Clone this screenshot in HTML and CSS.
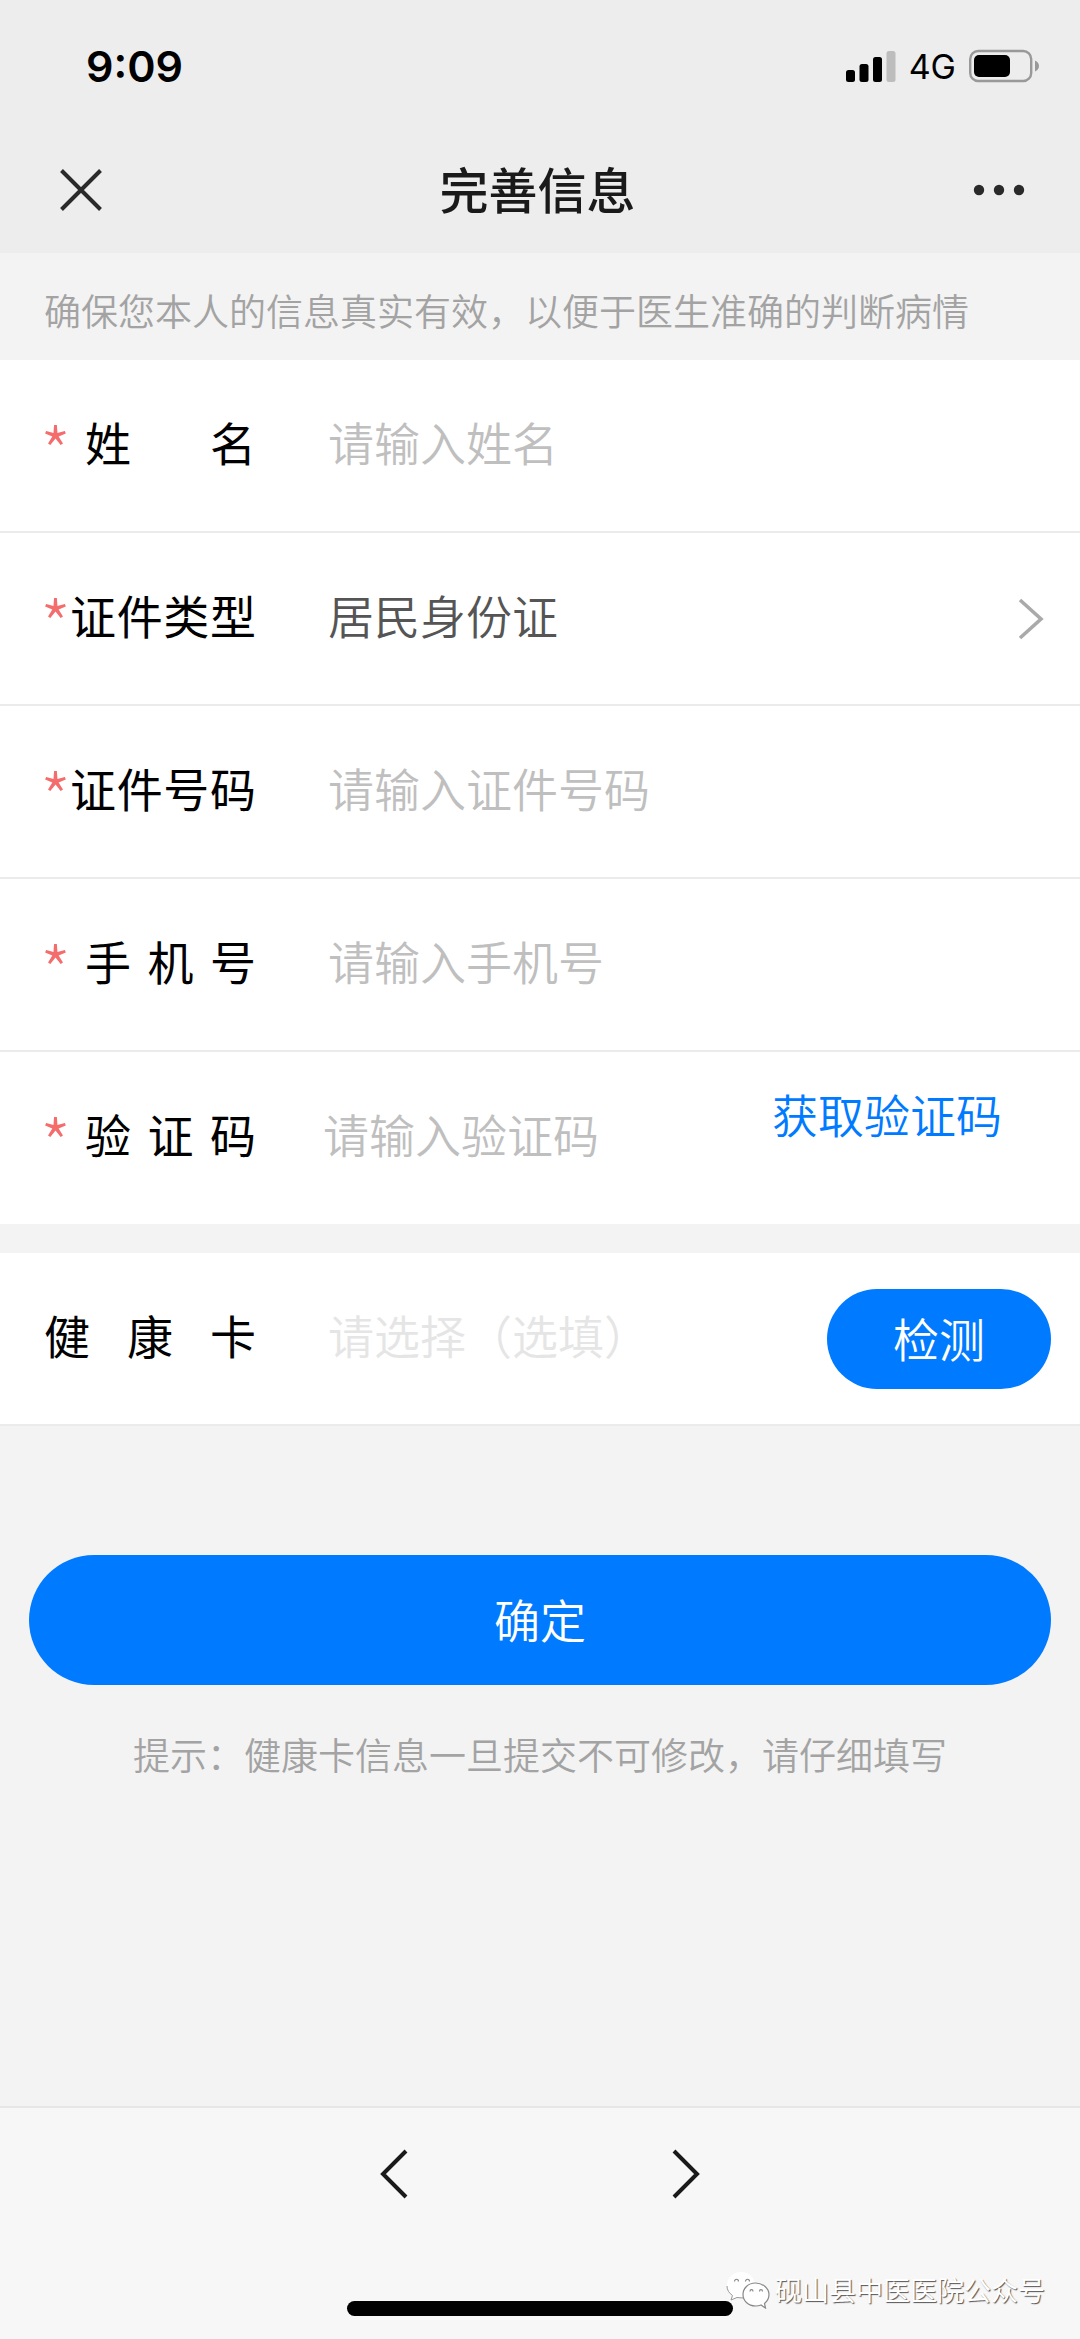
FILE: index.html
```html
<!DOCTYPE html>
<html lang="zh-CN">
<head>
<meta charset="utf-8">
<meta name="viewport" content="width=device-width, initial-scale=1">
<title>完善信息</title>
<link rel="stylesheet" href="styles.css">
</head>
<body>
<header class="header">
  <div class="status-bar">
    <span class="status-time">9:09</span>
    <div class="status-icons">
      <svg class="signal" width="50" height="32" viewBox="0 0 50 32" aria-hidden="true">
        <rect x="0" y="20" width="9" height="12" rx="2.5"/>
        <rect x="13.500" y="14" width="9" height="18" rx="2.5"/>
        <rect x="27" y="7" width="9" height="25" rx="2.5"/>
        <rect x="40.500" y="1" width="9" height="31" rx="2.5" fill="#bdbdbd"/>
      </svg>
      <span class="network">4G</span>
      <svg class="battery" width="71" height="34" viewBox="0 0 71 34" aria-hidden="true">
        <rect x="1.200" y="2" width="61" height="30" rx="8" fill="none" stroke="#999" stroke-width="2.400"/>
        <rect x="5" y="6" width="36" height="22" rx="5"/>
        <path d="M66 11.500c2.500 1 4 3 4 5.500s-1.500 4.500-4 5.500z" fill="#999"/>
      </svg>
    </div>
  </div>
  <div class="nav-bar">
    <button class="icon-button" type="button" aria-label="关闭">
      <svg width="42" height="42" viewBox="0 0 42 42"><path d="M1.500 1.500l39 39M40.500 1.500l-39 39" fill="none" stroke="#2a2a2a" stroke-width="4"/></svg>
    </button>
    <h1 class="title">完善信息</h1>
    <button class="icon-button" type="button" aria-label="更多">
      <svg width="52" height="12" viewBox="0 0 52 12" fill="#2a2a2a"><circle cx="6" cy="6" r="5.200"/><circle cx="26" cy="6" r="5.200"/><circle cx="46" cy="6" r="5.200"/></svg>
    </button>
  </div>
</header>

<main class="main">
  <p class="notice">确保您本人的信息真实有效，以便于医生准确的判断病情</p>
  <form class="form">
    <div class="group">
      <div class="row">
        <label class="label" for="name"><span class="star">*</span><span class="label-text short">姓名</span></label>
        <input class="field" id="name" type="text" placeholder="请输入姓名">
      </div>
      <div class="row">
        <label class="label" for="id-type"><span class="star">*</span><span class="label-text">证件类型</span></label>
        <select class="field" id="id-type"><option>居民身份证</option></select>
        <svg class="chevron" width="26" height="44" viewBox="0 0 26 44" aria-hidden="true"><path d="M2 3l21 19L2 41" fill="none" stroke="#aaa" stroke-width="3.600"/></svg>
      </div>
      <div class="row">
        <label class="label" for="id-number"><span class="star">*</span><span class="label-text">证件号码</span></label>
        <input class="field" id="id-number" type="text" placeholder="请输入证件号码">
      </div>
      <div class="row">
        <label class="label" for="phone"><span class="star">*</span><span class="label-text short">手机号</span></label>
        <input class="field" id="phone" type="tel" placeholder="请输入手机号">
      </div>
      <div class="row code-row">
        <label class="label" for="code"><span class="star">*</span><span class="label-text short">验证码</span></label>
        <input class="field" id="code" type="text" placeholder="请输入验证码">
        <button class="code-button" type="button">获取验证码</button>
      </div>
    </div>
    <div class="group">
      <div class="row card-row">
        <label class="label" for="card"><span class="label-text">健康卡</span></label>
        <input class="field faint" id="card" type="text" placeholder="请选择（选填）">
        <button class="check-button" type="button">检测</button>
      </div>
    </div>
    <button class="submit" type="submit">确定</button>
  </form>
  <p class="tip">提示：健康卡信息一旦提交不可修改，请仔细填写</p>
</main>

<footer class="toolbar">
  <nav class="toolbar-nav">
    <button class="icon-button" type="button" aria-label="后退">
      <svg width="28" height="50" viewBox="0 0 28 50"><path d="M26 2L3 25l23 23" fill="none" stroke="#1a1a1a" stroke-width="4"/></svg>
    </button>
    <button class="icon-button" type="button" aria-label="前进">
      <svg width="28" height="50" viewBox="0 0 28 50"><path d="M2 2l23 23L2 48" fill="none" stroke="#1a1a1a" stroke-width="4"/></svg>
    </button>
  </nav>
  <div class="home-indicator"></div>
  <div class="watermark">
    <svg width="44" height="38" viewBox="0 0 44 38" aria-hidden="true">
      <path d="M15 1C7 1 1 7 1 14c0 4 2 7.500 5.500 10L5 29l6-3c8 2.500 18-2 18-12C29 7 23 1 15 1z" fill="#fff"/>
      <path d="M1 15c0 4 2 7 5.500 9.500L5 29l6-2.500 6 .5" fill="none" stroke="#999" stroke-width="1"/>
      <path d="M29.500 12C22 12 17 17.500 17 23.500S22 35 29.500 35c2 0 4-.3 5.500-1l4.500 3-1-4.500c3-2.500 4.500-5.500 4.500-9C43 17.500 37 12 29.500 12z" fill="#fff" stroke="#888" stroke-width="1.200"/>
      <path d="M8.500 10.500c0-3 4-3 4 0M19.500 10.500c0-3 4-3 4 0M24 20.500c0-2.500 3-2.500 3 0M33.500 20.500c0-2.500 3-2.500 3 0" fill="none" stroke="#888" stroke-width="1.200"/>
    </svg>
    <span class="watermark-text">砚山县中医医院公众号</span>
  </div>
</footer>
</body>
</html>
```
FILE: styles.css
```css
* {
  box-sizing: border-box;
}

body {
  margin: 0;
  min-height: 100vh;
  display: flex;
  flex-direction: column;
  background: #f3f3f3;
  color: #000;
  font-family: "Noto Sans CJK SC", sans-serif;
  font-size: 46px;
  font-weight: 350;
}

button,
input,
select {
  margin: 0;
  padding: 0;
  border: 0;
  background: none;
  color: inherit;
  font: inherit;
}

svg {
  display: block;
}

.header {
  background: #ededed;
}

.status-bar {
  height: 126px;
  padding: 6px 40px 0 86px;
  display: flex;
  align-items: center;
  justify-content: space-between;
  font-family: Inter, sans-serif;
}

.status-time {
  font-size: 43px;
  font-weight: 600;
}

.status-icons {
  display: flex;
  align-items: center;
  gap: 13px;
}

.network {
  font-size: 34px;
  font-weight: 400;
}

.nav-bar {
  height: 127px;
  padding: 0 55px 0 60px;
  display: flex;
  align-items: center;
  justify-content: space-between;
}

.title {
  margin: 0;
  padding-bottom: 4px;
  color: #1a1a1a;
  font-size: 49px;
  font-weight: 500;
  line-height: 64px;
}

.notice,
.tip {
  margin: 0;
  color: #a3a3a3;
  font-size: 37px;
  line-height: 55px;
}

.notice {
  padding: 30px 44px 22px;
}

.form {
  display: flex;
  flex-direction: column;
}

.group {
  background: #fff;
}

.group + .group {
  margin-top: 29px;
}

.row {
  height: 173px;
  padding: 0 29px 0 44px;
  border-bottom: 2px solid #ebebeb;
  display: flex;
  align-items: center;
}

.code-row {
  height: 172px;
  border-bottom: 0;
}

.label {
  width: 212px;
  margin-right: 72px;
  flex: none;
  display: flex;
  align-items: center;
  font-weight: 400;
}

.star {
  width: 30px;
  margin-left: -4px;
  padding-top: 8px;
  flex: none;
  color: #f56c6c;
  font-size: 70px;
  font-weight: 300;
  line-height: 92px;
}

.label-text {
  flex: 1;
  padding-bottom: 10px;
  text-align: justify;
  text-align-last: justify;
  white-space: nowrap;
}

.short {
  padding-left: 15px;
}

.field {
  flex: 1;
  min-width: 0;
  height: 100px;
  padding-bottom: 10px;
  outline: 0;
  appearance: none;
  color: #555;
}

.field::placeholder {
  color: #bfbfbf;
  opacity: 1;
}

.faint::placeholder {
  color: #e5e5e5;
}

.chevron {
  margin-right: 7px;
}

.code-row .label {
  margin-right: 67px;
}

.code-button {
  align-self: flex-start;
  margin: 28px 49px 0 0;
  color: #007aff;
}

.check-button,
.submit {
  padding-bottom: 4px;
  background: #007aff;
  color: #fff;
}

.check-button {
  width: 224px;
  height: 100px;
  border-radius: 50px;
}

.submit {
  height: 130px;
  margin: 129px 29px 0;
  border-radius: 65px;
}

.tip {
  padding: 42px 29px;
  text-align: center;
}

.toolbar {
  position: relative;
  height: 233px;
  margin-top: auto;
  padding-bottom: 23px;
  border-top: 2px solid #e6e6e6;
  background: #f7f7f7;
  display: flex;
  flex-direction: column;
  justify-content: space-between;
  align-items: center;
}

.toolbar-nav {
  height: 132px;
  display: flex;
  align-items: center;
  gap: 264px;
}

.home-indicator {
  width: 386px;
  height: 15px;
  border-radius: 8px;
  background: #000;
}

.watermark {
  position: absolute;
  right: 35px;
  bottom: 29px;
  display: flex;
  align-items: center;
  gap: 5px;
}

.watermark-text {
  color: #fff;
  font-size: 27px;
  font-weight: 400;
  line-height: 40px;
  text-shadow: 1px 1px 1px #555;
}
```
